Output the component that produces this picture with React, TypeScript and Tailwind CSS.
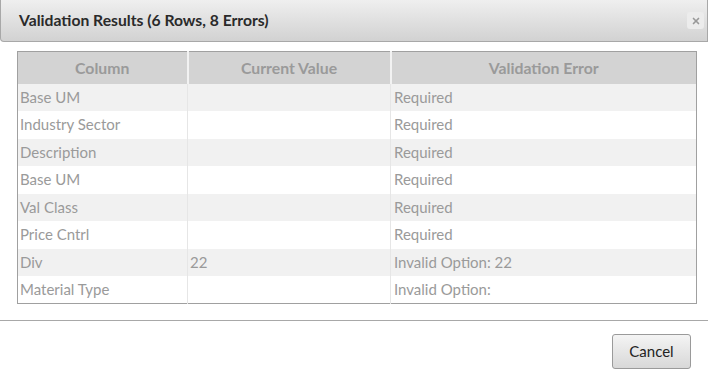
import { X } from 'lucide-react';

const rows: { column: string; value: string; error: string }[] = [
  { column: 'Base UM', value: '', error: 'Required' },
  { column: 'Industry Sector', value: '', error: 'Required' },
  { column: 'Description', value: '', error: 'Required' },
  { column: 'Base UM', value: '', error: 'Required' },
  { column: 'Val Class', value: '', error: 'Required' },
  { column: 'Price Cntrl', value: '', error: 'Required' },
  { column: 'Div', value: '22', error: 'Invalid Option: 22' },
  { column: 'Material Type', value: '', error: 'Invalid Option:' },
];

export default function App() {
  return (
    <div className="w-[708px] h-[378px] bg-white font-['Lato','Liberation_Sans',sans-serif] overflow-hidden">
      <div className="flex h-[42px] items-center justify-between rounded-bl-[4px] border border-t-0 border-[#a8a8a8] bg-gradient-to-b from-[#efefef] to-[#d2d2d2] pl-[18px] pr-[3px]">
        <h1 className="text-[15.7px] font-bold text-[#2a2a2a]">Validation Results (6 Rows, 8 Errors)</h1>
        <button className="flex h-[17px] w-[17px] items-center justify-center rounded-[3px] bg-[#ececec] text-[#999]">
          <X size={10} strokeWidth={4} />
        </button>
      </div>

      <div className="px-[17px] pt-[9px]">
        <table className="w-[680px] table-fixed border-collapse border border-[#a0a0a0] text-[15px] text-[#9a9a9a]">
          <thead>
            <tr className="h-[32px] bg-[#d3d3d3]">
              <th className="w-[170px] border-r-2 border-[#f2f2f2] text-[15.8px] font-bold">Column</th>
              <th className="w-[203px] border-r-2 border-[#f2f2f2] text-[15.8px] font-bold">Current Value</th>
              <th className="text-[15.8px] font-bold">Validation Error</th>
            </tr>
          </thead>
          <tbody>
            {rows.map((row, i) => (
              <tr key={i} className={`h-[27.5px] ${i % 2 === 0 ? 'bg-[#f1f1f1]' : 'bg-white'}`}>
                <td className="border-r border-[#e6e6e6] px-[2px] leading-none">{row.column}</td>
                <td className="border-r border-[#e6e6e6] px-[2px] leading-none">{row.value}</td>
                <td className="px-[3px] leading-none">{row.error}</td>
              </tr>
            ))}
          </tbody>
        </table>
      </div>

      <div className="mt-[16px] border-t border-[#a8a8a8]" />

      <div className="flex justify-end pr-[17px] pt-[13px]">
        <button className="h-[35px] w-[79px] rounded-[3px] border border-[#9a9a9a] bg-gradient-to-b from-[#f4f4f4] to-[#d8d8d8] text-[15px] text-[#222]">
          Cancel
        </button>
      </div>
    </div>
  );
}
